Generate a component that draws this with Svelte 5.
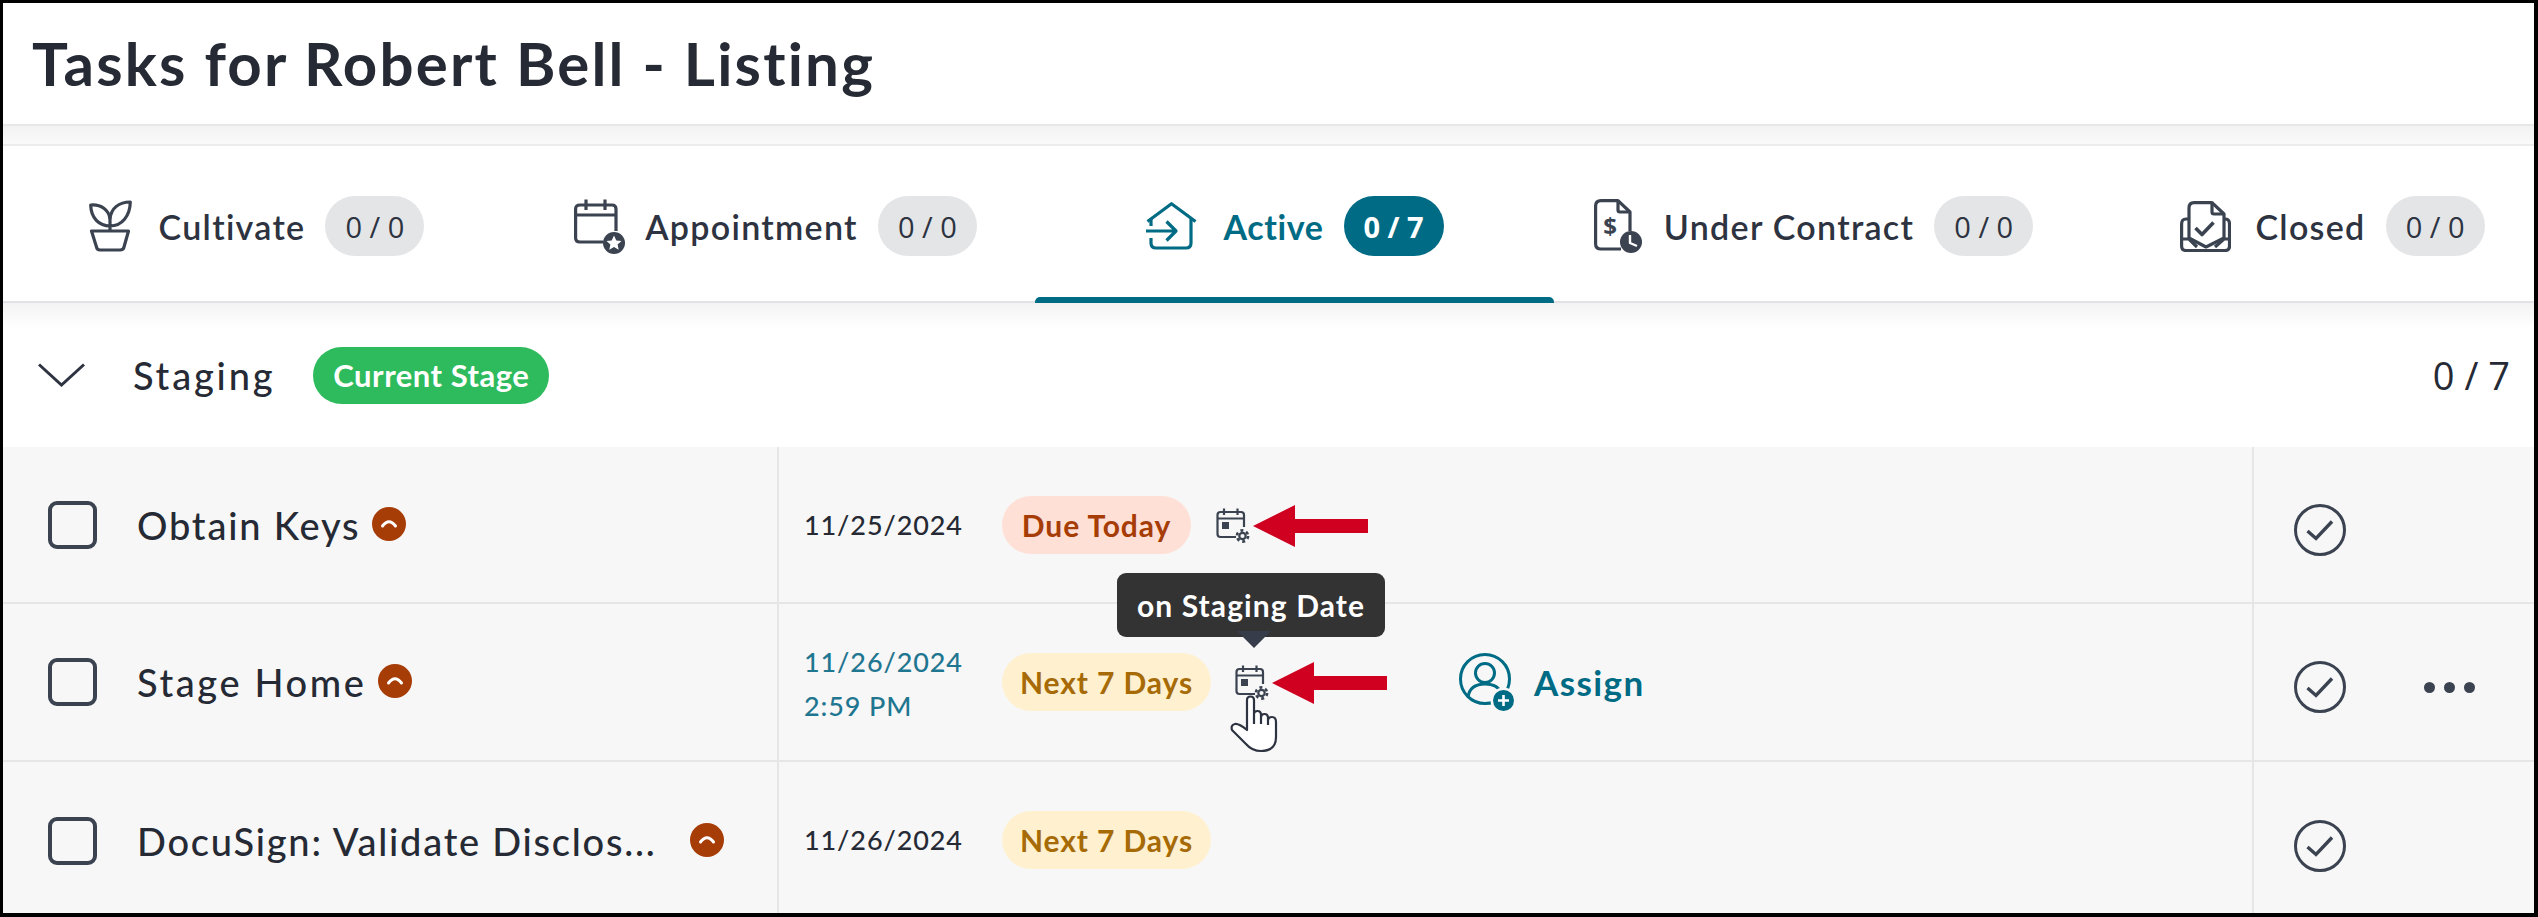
<script>
  const tabs = [
    { key: 'cultivate', label: 'Cultivate', count: '0 / 0' },
    { key: 'appointment', label: 'Appointment', count: '0 / 0' },
    { key: 'active', label: 'Active', count: '0 / 7', active: true },
    { key: 'contract', label: 'Under Contract', count: '0 / 0' },
    { key: 'closed', label: 'Closed', count: '0 / 0' }
  ];
</script>

{#snippet gearCal()}
  <svg class="cal" width="34" height="36" viewBox="0 0 34 36" fill="none" stroke="#3b4351" stroke-width="2.2">
    <path d="M20 30H4.5Q1.5 30 1.5 27V8Q1.5 5 4.5 5H25Q28 5 28 8V20" />
    <path d="M1.5 11.5H28M8 1.5V8M21.5 1.5V8" />
    <rect x="6" y="15" width="7" height="7" fill="#3b4351" stroke="none" />
    <circle cx="26.5" cy="29" r="3.2" stroke-width="2.2" />
    <circle cx="26.5" cy="29" r="5.6" stroke-width="2.6" stroke-dasharray="3 2.9" />
  </svg>
{/snippet}

{#snippet prio()}
  <svg class="prio" width="34" height="34" viewBox="0 0 34 34">
    <circle cx="17" cy="17" r="17" fill="#a63c06" />
    <path d="M10.5 19Q17 10.5 23.5 19" fill="none" stroke="#fff" stroke-width="3" stroke-linecap="round" />
  </svg>
{/snippet}

{#snippet check()}
  <svg class="check" width="52" height="52" viewBox="0 0 52 52" fill="none" stroke="#3b4351">
    <circle cx="26" cy="26" r="24.5" stroke-width="3" />
    <path d="M13.5 27L22 34.5L38 17.5" stroke-width="3.4" />
  </svg>
{/snippet}

{#snippet arrow()}
  <svg class="arrow" width="115" height="42" viewBox="0 0 115 42">
    <path d="M0 21L42 0V14H115V28H42V42Z" fill="#cf0020" />
  </svg>
{/snippet}

<div class="frame">
  <header class="head"><h1>Tasks for Robert Bell - Listing</h1></header>
  <div class="band"></div>

  <nav class="tabs">
    {#each tabs as t}
      <div class="tab {t.key}" class:on={t.active}>
        {#if t.key === 'cultivate'}
          <svg class="ti" width="43" height="52" viewBox="0 0 43 52" fill="none" stroke="#3b4351" stroke-width="3.2" stroke-linejoin="round">
            <path d="M21 26C10 26 2 18 1.7 5C12 4 20 10 21 19" />
            <path d="M21 26C33 26 41 16 41.3 2C30 2 22 8 21 19V31" />
            <path d="M2.5 31H39.5L35 47Q34.5 50 31 50H11Q8 50 7.5 47Z" />
          </svg>
        {:else if t.key === 'appointment'}
          <svg class="ti" width="51" height="55" viewBox="0 0 51 55" fill="none" stroke="#3b4351" stroke-width="3.2">
            <path d="M29 43H6Q1.6 43 1.6 39V10Q1.6 6 6 6H38Q42 6 42 10V32" />
            <path d="M1.6 16H42M12 0.5V11M31 0.5V11" />
            <circle cx="40" cy="44" r="11" fill="#3b4351" stroke="none" />
            <path d="M40 36.5L42.3 41.4L47.5 42L43.6 45.5L44.7 50.7L40 48.1L35.3 50.7L36.4 45.5L32.5 42L37.7 41.4Z" fill="#fff" stroke="none" />
          </svg>
        {:else if t.key === 'active'}
          <svg class="ti" width="51" height="48" viewBox="0 0 51 48" fill="none" stroke="#006b84" stroke-width="3.2" stroke-linejoin="round">
            <path d="M1.5 19.5L25.5 1.7L49.5 19.5" />
            <path d="M5 17V24M45 17V41Q45 46 40 46H10Q5 46 5 41V36" />
            <path d="M0 29H30M20.5 19.5L30 29L20.5 38.5" />
          </svg>
        {:else if t.key === 'contract'}
          <svg class="ti" width="48" height="54" viewBox="0 0 48 54" fill="none" stroke="#3b4351" stroke-width="3.2" stroke-linejoin="round">
            <path d="M27 50H7Q1.6 50 1.6 45V7Q1.6 1.6 7 1.6H24L36 13V32" />
            <path d="M24 1.6V11Q24 13 26 13H36" />
            <text x="16" y="36" font-family="Open Sans" font-weight="700" font-size="24" fill="#3b4351" stroke="none" text-anchor="middle">$</text>
            <circle cx="37" cy="43" r="11" fill="#3b4351" stroke="none" />
            <path d="M36 36V44L43 47" stroke="#fff" stroke-width="2.4" />
          </svg>
        {:else}
          <svg class="ti" width="51" height="51" viewBox="0 0 51 51" fill="none" stroke="#3b4351" stroke-width="3.2" stroke-linejoin="round">
            <path d="M9 37V7Q9 1.6 14 1.6H32L44 13V37L26 46Z" />
            <path d="M32 1.6V11Q32 13 34 13H44" />
            <path d="M9 18H6Q1.6 18 1.6 23V45Q1.6 49.5 6 49.5H45Q49.5 49.5 49.5 45V23Q49.5 18 45 18H44" />
            <path d="M1.6 38H9L17 46M49.5 38H44L35 46" />
            <path d="M15.5 27L22 33.5L33.5 21.5" stroke-width="3.6" />
          </svg>
        {/if}
        <span class="tl">{t.label}</span>
        <span class="count">{t.count}</span>
      </div>
    {/each}
  </nav>

  <section class="stage">
    <svg class="chev" width="47" height="24" viewBox="0 0 47 24" fill="none" stroke="#2d3340" stroke-width="3">
      <path d="M1 1.5L23.5 22L46 1.5" />
    </svg>
    <span class="sname">Staging</span>
    <span class="cur">Current Stage</span>
    <span class="total">0 / 7</span>
  </section>

  <div class="rows">
    <div class="row first">
      <div class="name">
        <span class="box"></span><span class="nm">Obtain Keys</span>{@render prio()}
      </div>
      <div class="mid">
        <div class="date">11/25/2024</div>
        <span class="badge due">Due Today</span>
        <span class="anchor one">{@render gearCal()}{@render arrow()}</span>
      </div>
      <div class="act">{@render check()}</div>
    </div>

    <div class="row second">
      <div class="name">
        <span class="box"></span><span class="nm">Stage Home</span>{@render prio()}
      </div>
      <div class="mid">
        <div class="date blue">11/26/2024<br />2:59 PM</div>
        <span class="badge next">Next 7 Days</span>
        <span class="anchor two">
          <span class="tip">on Staging Date</span>
          <span class="caret"></span>
          {@render gearCal()}{@render arrow()}
          <svg class="hand" width="48" height="58" viewBox="-1 -1 48 58" fill="#fff" stroke="#2d3340" stroke-width="2.2" stroke-linejoin="round">
            <path d="M16 34V4Q16 0.5 19.5 0.5Q23 0.5 23 4V18Q23 15 26.5 15Q30 15 30 19V22Q30 18 33.5 18Q37 18 37 22V25Q37 21 41 21Q45 21 45 26V41Q45 55 30 55Q21 55 15 48L1 34Q-0.5 29 4 28Q8 27.5 16 34Z" />
            <path d="M23 18V28M30 22V28M37 25V29" fill="none" />
          </svg>
        </span>
        <span class="assign">
          <svg width="56" height="59" viewBox="0 0 56 59" fill="none" stroke="#006b84" stroke-width="3">
            <circle cx="26" cy="26" r="24.5" />
            <circle cx="26" cy="20" r="9.5" />
            <path d="M9 44Q11 31 26 31Q39 31 42 40" />
            <circle cx="44.5" cy="47.5" r="13" fill="#f7f7f7" stroke="none" />
            <circle cx="44.5" cy="47.5" r="10.5" fill="#006b84" stroke="none" />
            <path d="M44.5 42V53M39 47.5H50" stroke="#fff" stroke-width="2.6" />
          </svg>
          <span>Assign</span>
        </span>
      </div>
      <div class="act">{@render check()}<span class="dots"><i></i><i></i><i></i></span></div>
    </div>

    <div class="row third">
      <div class="name">
        <span class="box"></span><span class="nm">DocuSign: Validate Disclos...</span>{@render prio()}
      </div>
      <div class="mid">
        <div class="date">11/26/2024</div>
        <span class="badge next">Next 7 Days</span>
      </div>
      <div class="act">{@render check()}</div>
    </div>
  </div>
</div>

<style>
  :global(body) { margin: 0; background: #fff; }
  .frame {
    width: 2538px; height: 917px; box-sizing: border-box;
    border: 3px solid #000; border-right-width: 4px; border-bottom-width: 4px;
    overflow: hidden; display: flex; flex-direction: column;
    font-family: "Lato", sans-serif; color: #252a34; background: #fff;
  }
  .head { height: 121px; flex: none; display: flex; align-items: center; padding-left: 29px; box-sizing: border-box; padding-bottom: 2px; }
  h1 { margin: 0; font-size: 60px; font-weight: 700; color: #252a34; letter-spacing: 2.2px; white-space: nowrap; }
  .band { height: 22px; flex: none; box-sizing: border-box; border-top: 2px solid #e8e8e8; border-bottom: 2px solid #ececec; background: linear-gradient(#f2f2f2, #fafafa); }
  .tabs {
    flex: none; height: 157px; box-sizing: border-box; margin-left: -6px;
    display: grid; grid-template-columns: repeat(5, 519px); position: relative;
  }
  .tabs::after { content: ""; position: absolute; left: 0; width: 2560px; bottom: 0; height: 2px; background: #e2e2e6; }
  .tab { display: flex; align-items: center; justify-content: center; gap: 20px; position: relative; color: #2d3340; padding-top: 3px; }
  .tab.on { color: #006b84; }
  .tab.on::after { content: ""; position: absolute; left: 0; right: 0; bottom: 0; height: 6px; background: #006b84; border-radius: 5px 5px 0 0; z-index: 1; }
  .ti { flex: none; margin-right: 7px; }
  .appointment .ti { margin-right: 0; }
  .contract .ti { margin-right: 2px; }
  .closed .ti { margin-right: 4px; }
  .tl { font-size: 34px; font-weight: 600; letter-spacing: 1.3px; white-space: nowrap; }
  .tab.on .tl { font-weight: 700; letter-spacing: 0.6px; }
  .count {
    background: #e4e5e7; height: 60px; width: 99px; border-radius: 30px; flex: none;
    display: flex; align-items: center; justify-content: center;
    font-family: "Open Sans", sans-serif; font-size: 29px; font-weight: 500; color: #2d3340;
  }
  .tab.on .count { background: #006b84; color: #fff; font-weight: 700; width: 100px; }
  .stage {
    height: 144px; flex: none; box-sizing: border-box; display: flex; align-items: center;
    padding: 0 24px 0 35px; background: linear-gradient(#f3f3f3, #fff 24px, #fff);
  }
  .chev { flex: none; margin-right: 48px; }
  .sname { font-size: 38px; font-weight: 500; letter-spacing: 2.8px; margin-right: 38px; color: #252a34; }
  .cur {
    background: #2dbb5d; color: #fff; height: 57px; width: 236px; border-radius: 29px;
    display: flex; align-items: center; justify-content: center; font-size: 31px; font-weight: 700; letter-spacing: 0.5px;
  }
  .total { margin-left: auto; font-family: "Open Sans", sans-serif; font-size: 38px; color: #252a34; }
  .rows { flex: 1; display: flex; flex-direction: column; background: #f7f7f7; }
  .row { display: grid; grid-template-columns: 774px 1477px 1fr; box-sizing: border-box; flex: none; border-bottom: 2px solid #e6e6e6; }
  .first { height: 157px; }
  .second { height: 158px; }
  .third { height: 158px; border-bottom: 0; }
  .name { display: flex; align-items: center; padding-left: 45px; }
  .box { flex: none; width: 49px; height: 48px; box-sizing: border-box; border: 4px solid #3b4351; border-radius: 9px; margin-right: 40px; }
  .nm { font-size: 38px; font-weight: 500; letter-spacing: 1.8px; margin-right: 12px; white-space: nowrap; }
  .second .nm { letter-spacing: 2.6px; }
  .third .nm { letter-spacing: 1.75px; margin-right: 34px; }
  .prio { flex: none; margin-top: -2px; }
  .mid { border-left: 2px solid #e6e6e6; border-right: 2px solid #e6e6e6; display: flex; align-items: center; padding-left: 25px; }
  .date { width: 198px; flex: none; font-size: 27px; font-weight: 500; line-height: 44px; letter-spacing: 0.9px; color: #252a34; }
  .blue { color: #1f7690; padding-top: 4px; }
  .badge { height: 58px; border-radius: 29px; display: flex; align-items: center; justify-content: center; font-size: 30px; font-weight: 700; letter-spacing: 0.9px; flex: none; }
  .third .badge { margin-bottom: 3px; }
  .third .date { margin-bottom: 2px; }
  .due { width: 189px; background: #ffe0d6; color: #a63c06; }
  .next { width: 209px; background: #fff0cf; color: #a66a06; }
  .anchor { position: relative; display: block; width: 34px; height: 36px; flex: none; }
  .one { margin-left: 25px; }
  .two { margin-left: 24px; }
  .cal { display: block; }
  .arrow { position: absolute; left: 37px; top: -2px; }
  .tip {
    position: absolute; left: -118px; top: -91px; width: 268px; height: 64px; border-radius: 9px;
    background: #333; color: #fff; display: flex; align-items: center; justify-content: center;
    font-size: 30px; font-weight: 700; letter-spacing: 1.1px; white-space: nowrap; z-index: 3;
  }
  .caret { position: absolute; left: 2px; top: -33px; width: 0; height: 0; border: 17px solid transparent; border-top-color: #363c4a; border-bottom: 0; z-index: 3; }
  .hand { position: absolute; left: -5px; top: 31px; z-index: 4; }
  .assign { display: flex; align-items: center; gap: 19px; margin-left: 190px; color: #006b84; font-size: 35px; font-weight: 700; letter-spacing: 1.4px; }
  .act { display: flex; align-items: center; padding-left: 40px; }
  .check { margin-top: 10px; flex: none; }
  .dots { display: flex; gap: 9px; margin-left: 78px; margin-top: 10px; }
  .dots i { display: block; width: 11px; height: 11px; border-radius: 50%; background: #3b4351; }
</style>
